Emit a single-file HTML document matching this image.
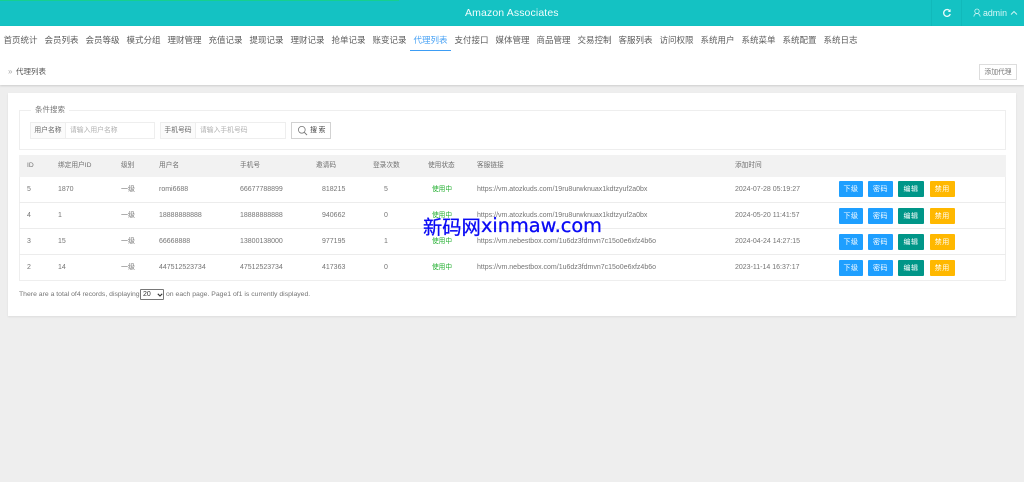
<!DOCTYPE html>
<html lang="zh"><head><meta charset="utf-8"><title>Amazon Associates</title>
<style>
html,body{margin:0;padding:0}
body{width:1024px;height:482px;overflow:hidden;background:#eeeeee;position:relative;font-family:"Liberation Sans","Noto Sans CJK SC",sans-serif;color:#666}
.a{position:absolute;white-space:nowrap}
.wrap{position:absolute;left:0;top:0;width:1024px;height:482px;filter:blur(.35px)}
.nav span{position:absolute;top:34px;font-size:8.5px;line-height:12px;color:#5c5c5c;white-space:nowrap}
.c{position:absolute;font-size:7px;line-height:12px;white-space:nowrap;color:#747474}
.h{color:#707070;font-size:6.7px}
.s{font-size:6.7px;color:#1fae2d;left:432px}
.line{position:absolute;left:19px;width:987px;height:1px;background:#ececec}
.b{position:absolute;height:16px;line-height:17px;border-radius:1px;color:#fff;font-size:7px;text-align:center;letter-spacing:.5px}
.blue{background:#1e9fff}.green{background:#009688}.yel{background:#ffb800}
.box{position:absolute;box-sizing:border-box;border:1px solid #eeeeee;background:#fff;height:17px;font-size:6.8px;line-height:16px;white-space:nowrap}
</style></head><body>
<div class="wrap">
<!-- header -->
<div class="a" style="left:0;top:0;width:1024px;height:26px;background:#14c2c3"></div>
<div class="a" style="left:0;top:0;width:399px;height:1px;background:#16d08f"></div>
<div class="a" style="left:465px;top:6px;font-size:10.5px;line-height:14px;color:#f2fdfd;letter-spacing:.12px">Amazon Associates</div>
<div class="a" style="left:931px;top:0;width:1px;height:26px;background:#11b9ba"></div>
<div class="a" style="left:961px;top:0;width:1px;height:26px;background:#11b9ba"></div>
<svg class="a" style="left:942px;top:8px" width="10" height="10" viewBox="0 0 10 10"><path d="M8 3.2A3.4 3.4 0 1 0 8.3 6" fill="none" stroke="#e8fbfb" stroke-width="1.3"/><path d="M8.6 1v3H5.8z" fill="#e8fbfb"/></svg>
<svg class="a" style="left:973px;top:8px" width="8" height="10" viewBox="0 0 8 10"><circle cx="4" cy="3.2" r="2.2" fill="none" stroke="#d5f6f6" stroke-width=".8"/><path d="M.8 8.6C1.2 6.4 2.4 5.5 4 5.5s2.8.9 3.2 3.1" fill="none" stroke="#d5f6f6" stroke-width=".8"/></svg>
<div class="a" style="left:983px;top:7px;font-size:8.8px;line-height:12px;color:#d8f7f7">admin</div>
<svg class="a" style="left:1010px;top:10px" width="8" height="6" viewBox="0 0 8 6"><path d="M1 4.5L4 1.5L7 4.5" fill="none" stroke="#d8f7f7" stroke-width=".9"/></svg>
<!-- nav -->
<div class="a" style="left:0;top:26px;width:1024px;height:59px;background:#fff;box-shadow:0 1px 2px rgba(0,0,0,.14)"></div>
<div class="nav">
<span style="left:3.5px">首页统计</span><span style="left:44.5px">会员列表</span><span style="left:85.5px">会员等级</span><span style="left:126.5px">模式分组</span><span style="left:167.5px">理财管理</span><span style="left:208.5px">充值记录</span><span style="left:249.5px">提现记录</span><span style="left:290.5px">理财记录</span><span style="left:331.5px">抢单记录</span><span style="left:372.5px">账变记录</span><span style="left:413.5px;color:#4aa3f5">代理列表</span><span style="left:454.5px">支付接口</span><span style="left:495.5px">媒体管理</span><span style="left:536.5px">商品管理</span><span style="left:577.5px">交易控制</span><span style="left:618.5px">客服列表</span><span style="left:659.5px">访问权限</span><span style="left:700.5px">系统用户</span><span style="left:741.5px">系统菜单</span><span style="left:782.5px">系统配置</span><span style="left:823.5px">系统日志</span>
</div>
<div class="a" style="left:410px;top:50px;width:41px;height:1px;background:#3d9df5"></div>
<div class="a" style="left:8px;top:67px;font-size:8px;line-height:10px;color:#aaa">»</div>
<div class="a" style="left:16px;top:66px;font-size:7.5px;line-height:11px;color:#555">代理列表</div>
<div class="a" style="left:979px;top:64px;width:38px;height:16px;box-sizing:border-box;border:1px solid #ddd;background:#fff;text-align:center;font-size:6.8px;line-height:15px;color:#777">添加代理</div>
<!-- panel -->
<div class="a" style="left:8px;top:93px;width:1008px;height:223px;background:#fff;box-shadow:0 1px 2px rgba(0,0,0,.08)"></div>
<div class="a" style="left:19px;top:110px;width:987px;height:40px;box-sizing:border-box;border:1px solid #eeeeee"></div>
<div class="a" style="left:31px;top:104px;padding:0 4px;background:#fff;font-size:7.5px;line-height:12px;color:#777">条件搜索</div>
<div class="box" style="left:30px;top:122px;width:36px;background:#fbfbfb;text-align:center;color:#666">用户名称</div>
<div class="box" style="left:65px;top:122px;width:90px;padding-left:4px;color:#b0b0b0">请输入用户名称</div>
<div class="box" style="left:160px;top:122px;width:36px;background:#fbfbfb;text-align:center;color:#666">手机号码</div>
<div class="box" style="left:195px;top:122px;width:91px;padding-left:4px;color:#b0b0b0">请输入手机号码</div>
<div class="a" style="left:291px;top:122px;width:40px;height:17px;box-sizing:border-box;border:1px solid #d2d2d2;background:#fff"></div>
<svg class="a" style="left:297px;top:125px" width="11" height="11" viewBox="0 0 11 11"><circle cx="4.8" cy="4.8" r="3.4" fill="none" stroke="#777" stroke-width=".8"/><path d="M7.3 7.3L10 10" stroke="#777" stroke-width=".9"/></svg>
<div class="a" style="left:310px;top:124px;font-size:7px;line-height:13px;color:#444;letter-spacing:1.5px">搜索</div>
<!-- table -->
<div class="a" style="left:19px;top:155px;width:987px;height:126px;box-sizing:border-box;border:1px solid #eeeeee"></div>
<div class="a" style="left:19px;top:155px;width:987px;height:22px;background:#f2f2f2"></div>
<div class="line" style="top:202px"></div><div class="line" style="top:228px"></div><div class="line" style="top:254px"></div>
<div class="c h" style="left:27px;top:160px">ID</div><div class="c h" style="left:58px;top:160px">绑定用户ID</div><div class="c h" style="left:121px;top:160px">级别</div><div class="c h" style="left:159px;top:160px">用户名</div><div class="c h" style="left:240px;top:160px">手机号</div><div class="c h" style="left:316px;top:160px">邀请码</div><div class="c h" style="left:373px;top:160px">登录次数</div><div class="c h" style="left:428px;top:160px">使用状态</div><div class="c h" style="left:477px;top:160px">客服链接</div><div class="c h" style="left:735px;top:160px">添加时间</div>
<!-- row 1 -->
<div class="c" style="left:27px;top:184px">5</div><div class="c" style="left:58px;top:184px">1870</div><div class="c" style="left:121px;top:184px">一级</div><div class="c" style="left:159px;top:184px">romi6688</div><div class="c" style="left:240px;top:184px">66677788899</div><div class="c" style="left:322px;top:184px">818215</div><div class="c" style="left:384px;top:184px">5</div><div class="c s" style="top:184px">使用中</div><div class="c" style="left:477px;top:184px">https://vm.atozkuds.com/19ru8urwknuax1kdtzyuf2a0bx</div><div class="c" style="left:735px;top:184px">2024-07-28 05:19:27</div>
<div class="b blue" style="left:839px;top:181px;width:24px">下级</div><div class="b blue" style="left:868px;top:181px;width:25px">密码</div><div class="b green" style="left:898px;top:181px;width:26px">编辑</div><div class="b yel" style="left:929.5px;top:181px;width:25.5px">禁用</div>
<!-- row 2 -->
<div class="c" style="left:27px;top:210px">4</div><div class="c" style="left:58px;top:210px">1</div><div class="c" style="left:121px;top:210px">一级</div><div class="c" style="left:159px;top:210px">18888888888</div><div class="c" style="left:240px;top:210px">18888888888</div><div class="c" style="left:322px;top:210px">940662</div><div class="c" style="left:384px;top:210px">0</div><div class="c s" style="top:210px">使用中</div><div class="c" style="left:477px;top:210px">https://vm.atozkuds.com/19ru8urwknuax1kdtzyuf2a0bx</div><div class="c" style="left:735px;top:210px">2024-05-20 11:41:57</div>
<div class="b blue" style="left:839px;top:207.5px;width:24px">下级</div><div class="b blue" style="left:868px;top:207.5px;width:25px">密码</div><div class="b green" style="left:898px;top:207.5px;width:26px">编辑</div><div class="b yel" style="left:929.5px;top:207.5px;width:25.5px">禁用</div>
<!-- row 3 -->
<div class="c" style="left:27px;top:236px">3</div><div class="c" style="left:58px;top:236px">15</div><div class="c" style="left:121px;top:236px">一级</div><div class="c" style="left:159px;top:236px">66668888</div><div class="c" style="left:240px;top:236px">13800138000</div><div class="c" style="left:322px;top:236px">977195</div><div class="c" style="left:384px;top:236px">1</div><div class="c s" style="top:236px">使用中</div><div class="c" style="left:477px;top:236px">https://vm.nebestbox.com/1u6dz3fdmvn7c15o0e6xfz4b6o</div><div class="c" style="left:735px;top:236px">2024-04-24 14:27:15</div>
<div class="b blue" style="left:839px;top:233.5px;width:24px">下级</div><div class="b blue" style="left:868px;top:233.5px;width:25px">密码</div><div class="b green" style="left:898px;top:233.5px;width:26px">编辑</div><div class="b yel" style="left:929.5px;top:233.5px;width:25.5px">禁用</div>
<!-- row 4 -->
<div class="c" style="left:27px;top:262px">2</div><div class="c" style="left:58px;top:262px">14</div><div class="c" style="left:121px;top:262px">一级</div><div class="c" style="left:159px;top:262px">447512523734</div><div class="c" style="left:240px;top:262px">47512523734</div><div class="c" style="left:322px;top:262px">417363</div><div class="c" style="left:384px;top:262px">0</div><div class="c s" style="top:262px">使用中</div><div class="c" style="left:477px;top:262px">https://vm.nebestbox.com/1u6dz3fdmvn7c15o0e6xfz4b6o</div><div class="c" style="left:735px;top:262px">2023-11-14 16:37:17</div>
<div class="b blue" style="left:839px;top:260px;width:24px">下级</div><div class="b blue" style="left:868px;top:260px;width:25px">密码</div><div class="b green" style="left:898px;top:260px;width:26px">编辑</div><div class="b yel" style="left:929.5px;top:260px;width:25.5px">禁用</div>
<!-- footer -->
<div class="c" style="left:19px;top:289px;font-size:6.85px">There are a total of4 records, displaying</div>
<div class="a" style="left:140px;top:289px;width:24px;height:11px;box-sizing:border-box;border:1px solid #777;border-radius:1px;background:#fff;font-size:7px;line-height:9px;padding-left:2px;color:#333">20</div>
<svg class="a" style="left:157px;top:293px" width="6" height="4" viewBox="0 0 6 4"><path d="M.8.8L3 3L5.2.8" fill="none" stroke="#333" stroke-width="1.1"/></svg>
<div class="c" style="left:166px;top:289px;font-size:6.85px">on each page. Page1 of1 is currently displayed.</div>
<!-- watermark -->
<div class="a" style="left:423px;top:212.5px;font-size:19.3px;line-height:26px;color:#0a0af5;-webkit-text-stroke:.3px #0a0af5;font-family:'Noto Sans CJK SC',sans-serif">新码网</div>
<div class="a" style="left:481px;top:212.5px;font-size:19.3px;line-height:26px;color:#0a0af5;-webkit-text-stroke:.3px #0a0af5;font-family:'DejaVu Sans',sans-serif">xinmaw.com</div>
</div>
</body></html>
